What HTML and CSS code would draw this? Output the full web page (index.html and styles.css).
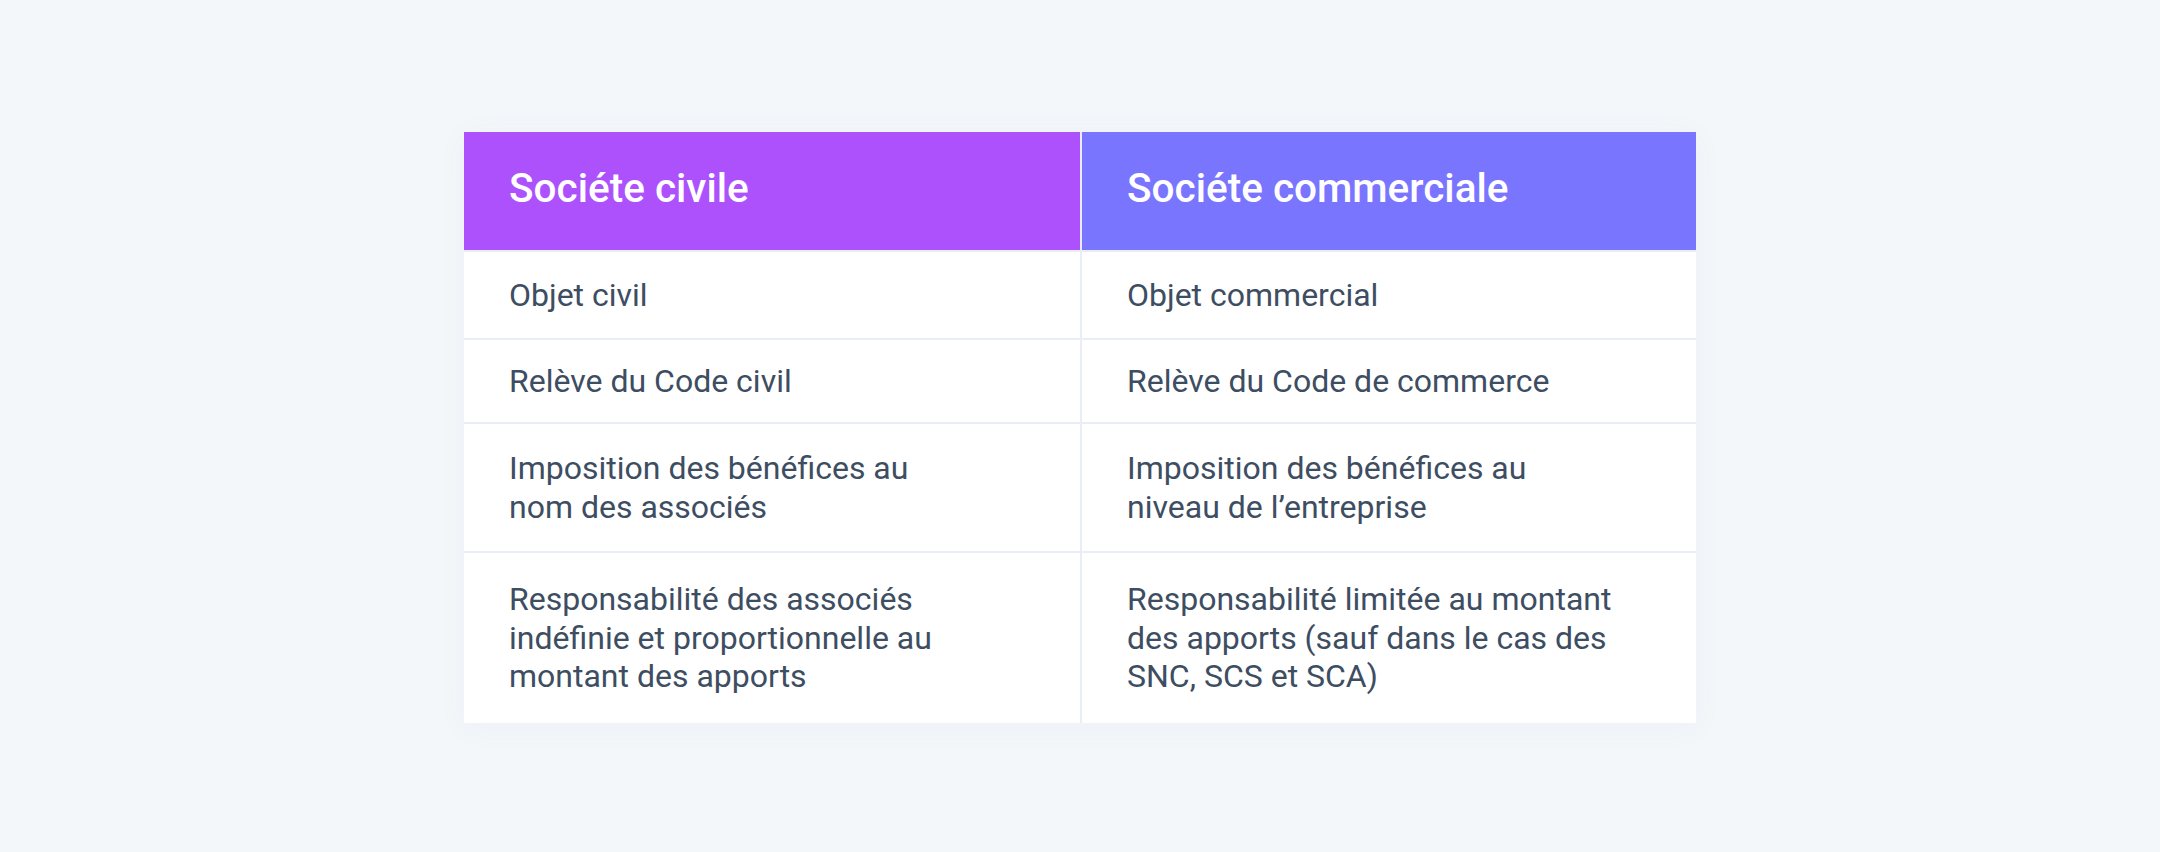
FILE: index.html
```html
<!DOCTYPE html>
<html lang="fr">
<head>
<meta charset="utf-8">
<title>Société civile vs commerciale</title>
<link rel="stylesheet" href="styles.css">
</head>
<body>
<main class="page">
  <div class="table">
    <div class="cell head head-civil">Sociéte civile</div>
    <div class="cell head head-com">Sociéte commerciale</div>

    <div class="cell">Objet civil</div>
    <div class="cell">Objet commercial</div>

    <div class="cell">Relève du Code civil</div>
    <div class="cell">Relève du Code de commerce</div>

    <div class="cell">Imposition des bénéfices au<br>nom des associés</div>
    <div class="cell">Imposition des bénéfices au<br>niveau de l’entreprise</div>

    <div class="cell">Responsabilité des associés<br>indéfinie et proportionnelle au<br>montant des apports</div>
    <div class="cell">Responsabilité limitée au montant<br>des apports (sauf dans le cas des<br>SNC, SCS et SCA)</div>
  </div>
</main>
</body>
</html>
```

FILE: styles.css
```css
html, body {
  margin: 0;
  padding: 0;
  background: #f4f7fa;
}

.page {
  display: flex;
  justify-content: center;
  padding-top: 132px;
  height: 852px;
  box-sizing: border-box;
}

.table {
  display: grid;
  grid-template-columns: 616px 614px;
  grid-template-rows: 118px 86px 82px 127px 170px;
  gap: 2px;
  background: #e9eef5;
  width: 1232px;
  height: 591px;
  box-shadow: 0 4px 30px rgba(40, 60, 90, 0.04);
  font-family: Roboto, "Liberation Sans", Arial, sans-serif;
}

.cell {
  background: #ffffff;
  display: flex;
  align-items: center;
  padding: 0 44px 0 45px;
  font-size: 32px;
  line-height: 38.5px;
  color: #3d4d62;
}

.head {
  font-size: 40.5px;
  font-weight: 500;
  color: #ffffff;
  padding-bottom: 6px;
}

.head-civil {
  background: #ad51fc;
}

.head-com {
  background: #7a75ff;
}
```
